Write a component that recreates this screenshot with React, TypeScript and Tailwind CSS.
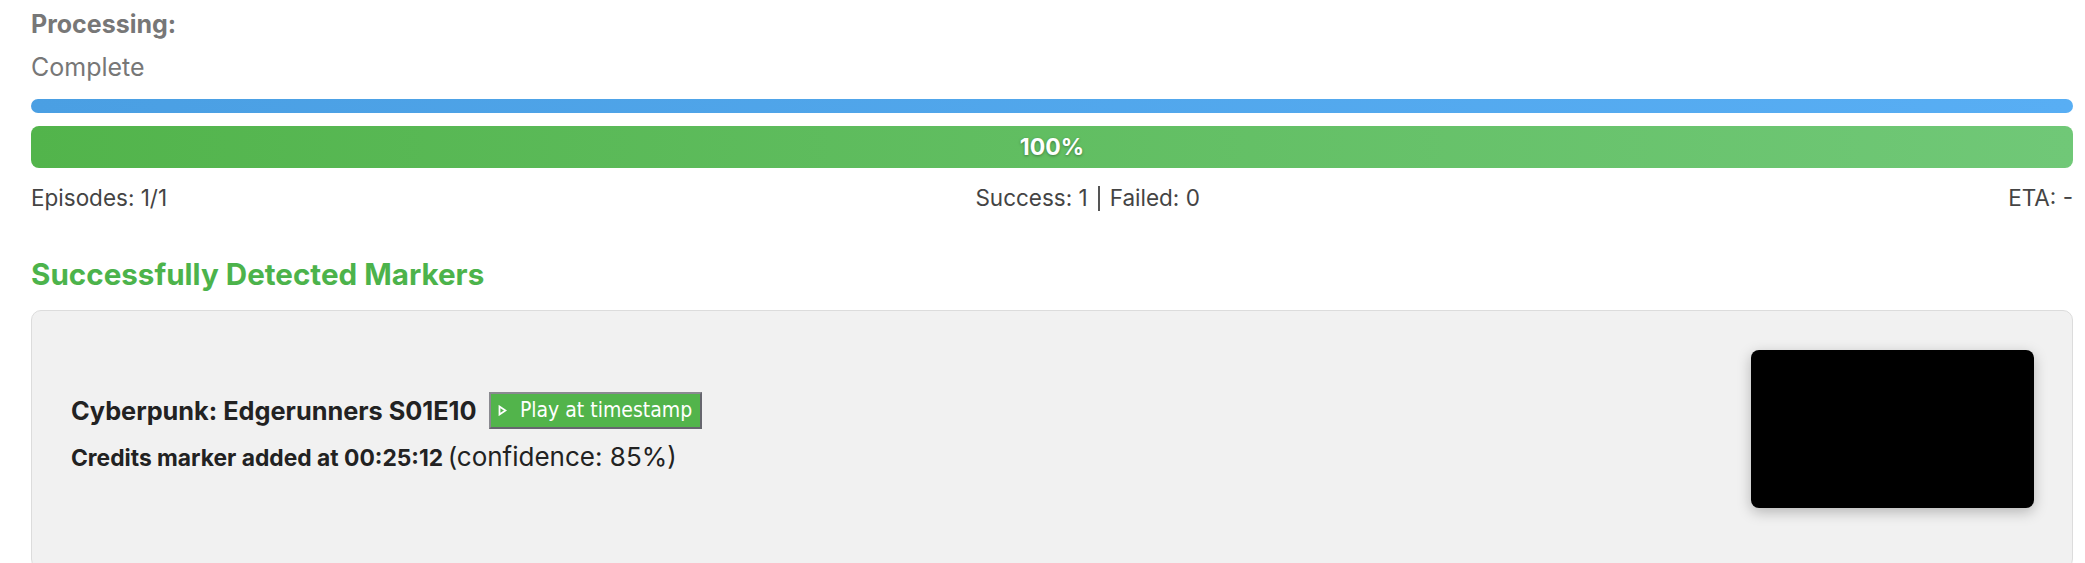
export default function App() {
  return (
    <div className="min-h-screen bg-white pl-[31px] pr-[12px] pt-[9px] font-['Inter',sans-serif]">
      <div className="text-[25px] font-bold leading-[30px] text-[#777]">Processing:</div>
      <div className="mt-[13px] text-[25px] leading-[30px] text-[#777]">Complete</div>

      <div className="mt-[17px] h-[14px] rounded-full bg-gradient-to-r from-[#4a9fe3] to-[#58aef4]" />

      <div className="mt-[13px] flex h-[42px] items-center justify-center rounded-[8px] bg-gradient-to-r from-[#52b44b] to-[#70c877]">
        <span className="text-[23px] font-bold text-white [text-shadow:0_1px_3px_rgba(0,0,0,0.35)]">100%</span>
      </div>

      <div className="mt-[15px] flex items-center justify-between text-[22.5px] leading-[30px] text-[#444]">
        <span>Episodes: 1/1</span>
        <span className="flex items-center">
          Success: 1
          <span className="mx-[10px] inline-block h-[25px] w-[2px] bg-[#555]" />
          Failed: 0
        </span>
        <span>ETA: -</span>
      </div>

      <h2 className="mt-[42px] text-[29.6px] font-bold leading-[38px] text-[#4cb34b]">Successfully Detected Markers</h2>

      <div className="mt-[17px] rounded-[10px] border border-[#dcdcdc] bg-[#f1f1f1] pb-[60px] pl-[39px] pr-[38px] pt-[39px]">
        <div className="flex items-center justify-between">
          <div className="mt-[10px]">
            <div className="flex items-center gap-[12px]">
              <span className="text-[25.3px] font-bold text-[#222]">Cyberpunk: Edgerunners S01E10</span>
              <button className="flex h-[37px] w-[213px] items-center justify-center gap-[13px] border-2 border-t-[#8a8a90] border-l-[#8a8a90] border-r-[#66666e] border-b-[#66666e] bg-[#52b44b] font-['DejaVu_Sans_Condensed','Liberation_Sans_Narrow','DejaVu_Sans',sans-serif] text-[21px] text-white">
                <svg width="9" height="11" viewBox="0 0 9 11" fill="none" stroke="white" strokeWidth="1.8">
                  <path d="M1.5 1.5 L7.5 5.5 L1.5 9.5 Z" />
                </svg>
                Play at timestamp
              </button>
            </div>
            <div className="mt-[12px] leading-[32px] text-[#222]">
              <strong className="text-[22.8px] font-bold">Credits marker added at 00:25:12</strong>{" "}
              <span className="text-[26px]">(confidence: 85%)</span>
            </div>
          </div>
          <div className="h-[158px] w-[283px] rounded-[8px] bg-black shadow-[0_4px_14px_rgba(0,0,0,0.25)]" />
        </div>
      </div>
    </div>
  )
}
